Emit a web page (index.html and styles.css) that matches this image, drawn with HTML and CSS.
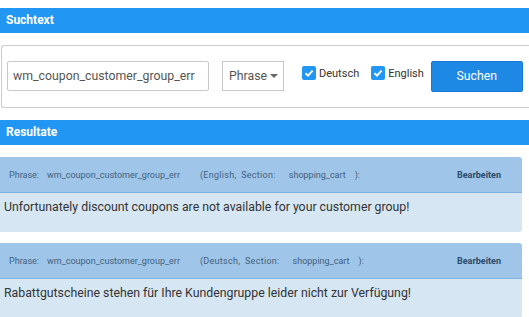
FILE: index.html
```html
<!DOCTYPE html>
<html>
<head>
<meta charset="utf-8">
<link rel="stylesheet" href="styles.css">
</head>
<body>
<div class="bar bar-top">Suchtext</div>
<div class="search">
  <div class="input">wm_coupon_customer_group_err</div>
  <div class="select">Phrase<span class="caret"></span></div>
  <label class="check"><span class="box"><svg width="10" height="10" viewBox="0 0 10 10"><path d="M1.5 5.2 L4 7.6 L8.6 2.6" fill="none" stroke="#fff" stroke-width="2"/></svg></span>Deutsch</label>
  <label class="check check-en"><span class="box"><svg width="10" height="10" viewBox="0 0 10 10"><path d="M1.5 5.2 L4 7.6 L8.6 2.6" fill="none" stroke="#fff" stroke-width="2"/></svg></span>English</label>
  <div class="button">Suchen</div>
</div>
<div class="bar bar-results">Resultate</div>
<div class="card">
  <div class="card-head">
    <span class="meta"><span class="seg seg-label">Phrase:</span><span class="seg seg-key">wm_coupon_customer_group_err</span><span class="seg seg-lang">(English, Section:</span><span class="seg seg-sec">shopping_cart</span><span class="seg">):</span></span>
    <span class="edit">Bearbeiten</span>
  </div>
  <div class="card-body">Unfortunately discount coupons are not available for your customer group!</div>
</div>
<div class="card">
  <div class="card-head">
    <span class="meta"><span class="seg seg-label">Phrase:</span><span class="seg seg-key">wm_coupon_customer_group_err</span><span class="seg seg-lang">(Deutsch, Section:</span><span class="seg seg-sec">shopping_cart</span><span class="seg">):</span></span>
    <span class="edit">Bearbeiten</span>
  </div>
  <div class="card-body">Rabattgutscheine stehen für Ihre Kundengruppe leider nicht zur Verfügung!</div>
</div>
</body>
</html>
```
FILE: styles.css
```css
html, body {
  margin: 0;
  padding: 0;
  background: #fff;
  font-family: Roboto, "Noto Sans", sans-serif;
  overflow: hidden;
}
.bar {
  background: #2196f3;
  color: #fff;
  font-weight: bold;
  font-size: 12px;
  height: 25px;
  line-height: 25px;
  padding-left: 6px;
}
.bar-top {
  margin-top: 8px;
}
.search {
  margin: 12px 0 0 1px;
  height: 63px;
  border: 1px solid #cccccc;
  border-right: none;
  border-radius: 3px 0 0 3px;
  display: flex;
  align-items: flex-start;
  padding: 15px 0 0 5px;
  box-sizing: border-box;
}
.input {
  width: 202px;
  height: 30px;
  box-sizing: border-box;
  border: 1px solid #c8c8c8;
  border-radius: 2px;
  font-size: 12.3px;
  color: #555;
  line-height: 28px;
  padding-left: 5px;
}
.select {
  margin-left: 13px;
  width: 62px;
  height: 30px;
  box-sizing: border-box;
  border: 1px solid #c8c8c8;
  font-size: 12.3px;
  color: #555;
  line-height: 28px;
  padding-left: 6px;
  display: flex;
  align-items: center;
}
.caret {
  margin-left: 3px;
  width: 0;
  height: 0;
  border-left: 4px solid transparent;
  border-right: 4px solid transparent;
  border-top: 4px solid #666;
}
.check {
  display: flex;
  align-items: center;
  margin-left: 18px;
  margin-top: 5px;
  font-size: 11px;
  color: #333;
  height: 14px;
}
.check-en {
  margin-left: 12px;
}
.box {
  width: 14px;
  height: 14px;
  border-radius: 2px;
  background: #2196f3;
  display: flex;
  align-items: center;
  justify-content: center;
  margin-right: 3px;
}
.button {
  margin-left: 7px;
  width: 92px;
  height: 31px;
  box-sizing: border-box;
  background: #1e88e5;
  border: 1px solid #1976d2;
  border-radius: 2px;
  color: #fff;
  font-size: 12.3px;
  line-height: 29px;
  text-align: center;
}
.bar-results {
  margin-top: 12px;
}
.card {
  margin-top: 12px;
  width: 522px;
  border-radius: 0 3px 3px 0;
  overflow: hidden;
}
.card + .card {
  margin-top: 11px;
}
.card-head {
  background: #9fc5e8;
  height: 36px;
  box-sizing: border-box;
  border-bottom: 1px solid #7eb1de;
  display: flex;
  align-items: center;
  padding: 0 21px 0 9px;
  font-size: 9px;
  color: #42617f;
}
.meta {
  flex: 1;
  display: flex;
}
.seg-label {
  margin-right: 8px;
}
.seg-key {
  margin-right: 20px;
}
.seg-lang {
  margin-right: 13px;
  letter-spacing: 0.3px;
  word-spacing: 2px;
}
.seg-sec {
  margin-right: 9px;
}
.edit {
  font-weight: bold;
  color: #2a4b6c;
}
.card-body {
  background: #d6e6f3;
  height: 39px;
  padding: 7px 0 0 4px;
  box-sizing: border-box;
  font-size: 12.3px;
  color: #333;
}
```
